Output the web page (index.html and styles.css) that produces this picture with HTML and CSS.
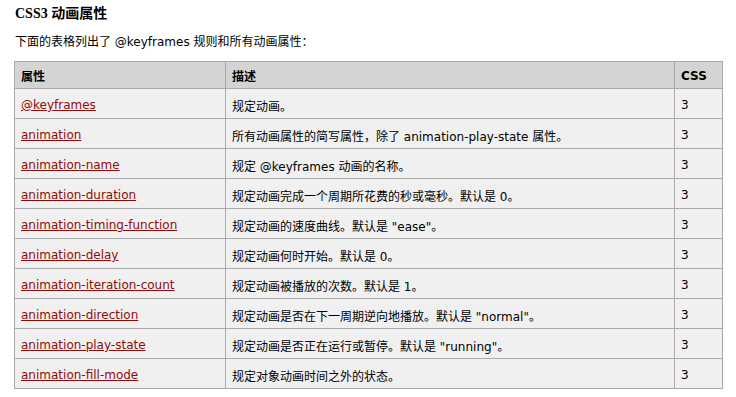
FILE: index.html
```html
<!DOCTYPE html>
<html lang="zh-CN">
<head>
<meta charset="utf-8">
<link rel="stylesheet" href="styles.css">
</head>
<body>
<h2 class="title">CSS3 动画属性</h2>
<p class="intro">下面的表格列出了 @keyframes 规则和所有动画属性：</p>
<table class="ref">
  <tr><th class="c1">属性</th><th class="c2">描述</th><th class="c3">CSS</th></tr>
  <tr><td><a href="#">@keyframes</a></td><td>规定动画。</td><td>3</td></tr>
  <tr><td><a href="#">animation</a></td><td>所有动画属性的简写属性，除了 animation-play-state 属性。</td><td>3</td></tr>
  <tr><td><a href="#">animation-name</a></td><td>规定 @keyframes 动画的名称。</td><td>3</td></tr>
  <tr><td><a href="#">animation-duration</a></td><td>规定动画完成一个周期所花费的秒或毫秒。默认是 0。</td><td>3</td></tr>
  <tr><td><a href="#">animation-timing-function</a></td><td>规定动画的速度曲线。默认是 "ease"。</td><td>3</td></tr>
  <tr><td><a href="#">animation-delay</a></td><td>规定动画何时开始。默认是 0。</td><td>3</td></tr>
  <tr><td><a href="#">animation-iteration-count</a></td><td>规定动画被播放的次数。默认是 1。</td><td>3</td></tr>
  <tr><td><a href="#">animation-direction</a></td><td>规定动画是否在下一周期逆向地播放。默认是 "normal"。</td><td>3</td></tr>
  <tr><td><a href="#">animation-play-state</a></td><td>规定动画是否正在运行或暂停。默认是 "running"。</td><td>3</td></tr>
  <tr><td><a href="#">animation-fill-mode</a></td><td>规定对象动画时间之外的状态。</td><td>3</td></tr>
</table>
</body>
</html>
```
FILE: styles.css
```css
body {
  margin: 0;
  padding: 0 0 0 14px;
  background: #fff;
  color: #000;
  font-family: "DejaVu Sans", "Noto Sans CJK SC", sans-serif;
  font-size: 12px;
}
.title {
  margin: 0;
  padding-top: 5px;
  font-family: "Liberation Serif", "Noto Sans CJK SC", serif;
  font-size: 14px;
  font-weight: bold;
  line-height: 18px;
  padding-left: 1px;
}
.intro {
  margin: 0;
  padding-top: 11px;
  padding-left: 1px;
  line-height: 16px;
  font-size: 12px;
}
.ref {
  margin-top: 11px;
  border-collapse: collapse;
  width: 709px;
  border: 1px solid #aaa;
  background: #f0f0f0;
}
.ref th, .ref td {
  border: 1px solid #aaa;
  text-align: left;
  padding: 0 6px;
  vertical-align: middle;
  font-size: 12px;
}
.ref th {
  background: #d4d4d4;
  height: 25px;
  padding-top: 1px;
  font-weight: bold;
}
.ref td {
  height: 26px;
  padding-top: 3px;
}
.c1 { width: 198px; }
.c2 { width: 436px; }
.c3 { width: auto; }
.ref a {
  color: #900b09;
  text-decoration: underline;
}
```
